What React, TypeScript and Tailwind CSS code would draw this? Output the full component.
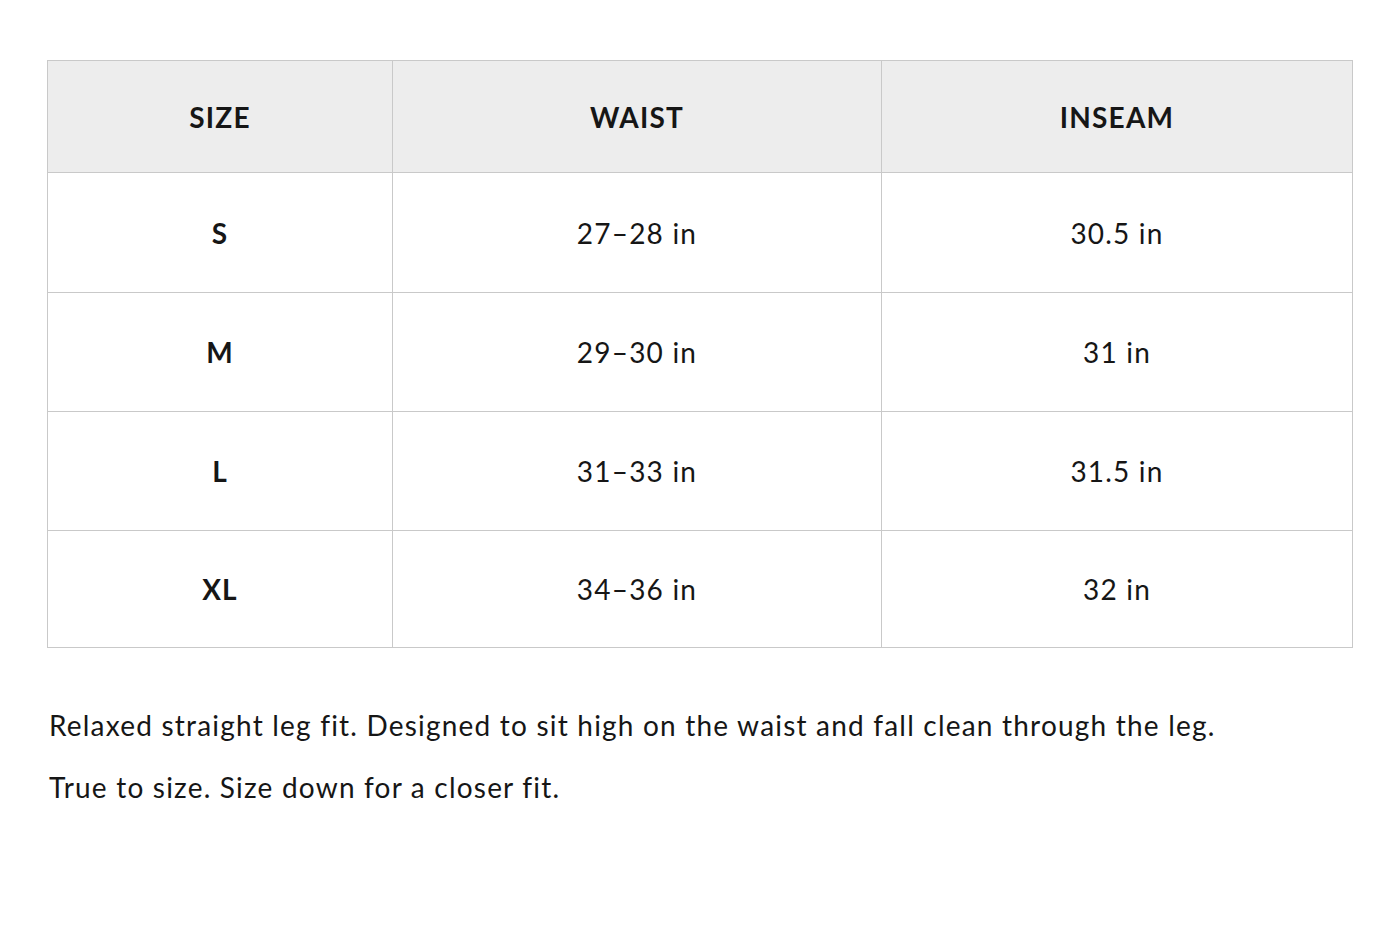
import React from 'react';

const rows = [
  { size: 'S', waist: '27–28 in', inseam: '30.5 in', h: 'h-[120px]' },
  { size: 'M', waist: '29–30 in', inseam: '31 in', h: 'h-[119px]' },
  { size: 'L', waist: '31–33 in', inseam: '31.5 in', h: 'h-[119px]' },
  { size: 'XL', waist: '34–36 in', inseam: '32 in', h: 'h-[117px]' },
];

const App: React.FC = () => {
  return (
    <div className="min-h-[933px] bg-white pt-[60px] pl-[47px] text-[#161616] tracking-[1.2px] font-['Lato','Liberation_Sans',sans-serif]">
      <div className="grid w-[1306px] grid-cols-[345px_489px_471px] border-l border-t border-[#c9c9c9]">
        <div className="flex h-[112px] items-center justify-center border-r border-b border-[#c9c9c9] bg-[#ededed] text-[28px] font-bold">SIZE</div>
        <div className="flex h-[112px] items-center justify-center border-r border-b border-[#c9c9c9] bg-[#ededed] text-[28px] font-bold">WAIST</div>
        <div className="flex h-[112px] items-center justify-center border-r border-b border-[#c9c9c9] bg-[#ededed] text-[28px] font-bold">INSEAM</div>
        {rows.map((r) => (
          <React.Fragment key={r.size}>
            <div className={`flex ${r.h} items-center justify-center border-r border-b border-[#c9c9c9] text-[28px] font-bold`}>{r.size}</div>
            <div className={`flex ${r.h} items-center justify-center border-r border-b border-[#c9c9c9] text-[28px]`}>{r.waist}</div>
            <div className={`flex ${r.h} items-center justify-center border-r border-b border-[#c9c9c9] text-[28px]`}>{r.inseam}</div>
          </React.Fragment>
        ))}
      </div>
      <div className="mt-[46px] pl-[2px] text-[28px] leading-[62px]">
        <p>Relaxed straight leg fit. Designed to sit high on the waist and fall clean through the leg.</p>
        <p>True to size. Size down for a closer fit.</p>
      </div>
    </div>
  );
};

export default App;
